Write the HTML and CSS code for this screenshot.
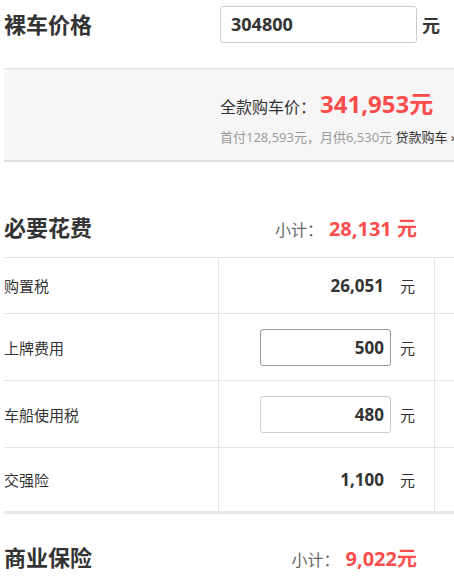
FILE: index.html
```html
<!DOCTYPE html>
<html lang="zh">
<head>
<meta charset="utf-8">
<link rel="stylesheet" href="styles.css">
</head>
<body>
<div class="page">
  <div class="naked">
    <div class="naked-title">裸车价格</div>
    <input class="naked-input" type="text" value="304800">
    <span class="naked-unit">元</span>
  </div>

  <div class="summary">
    <div class="summary-line">全款购车价<span class="punc">：</span><span class="red-big">341,953元</span></div>
    <div class="summary-sub"><span class="gray">首付128,593元<span class="punc">，</span>月供6,530元</span> <span class="loan">贷款购车 ›</span></div>
  </div>

  <div class="section-head first">
    <div class="section-title">必要花费</div>
    <div class="subtotal">小计<span class="punc">：</span><span class="red-mid">28,131 元</span></div>
  </div>

  <div class="table">
    <div class="row r1">
      <div class="cell label">购置税</div>
      <div class="cell value"><span class="val">26,051</span><span class="unit">元</span></div>
      <div class="cell extra"></div>
    </div>
    <div class="row r2">
      <div class="cell label">上牌费用</div>
      <div class="cell value"><input class="val-input focus" type="text" value="500"><span class="unit">元</span></div>
      <div class="cell extra"></div>
    </div>
    <div class="row r3">
      <div class="cell label">车船使用税</div>
      <div class="cell value"><input class="val-input" type="text" value="480"><span class="unit">元</span></div>
      <div class="cell extra"></div>
    </div>
    <div class="row r4">
      <div class="cell label">交强险</div>
      <div class="cell value"><span class="val">1,100</span><span class="unit">元</span></div>
      <div class="cell extra"></div>
    </div>
  </div>

  <div class="section-head second">
    <div class="section-title">商业保险</div>
    <div class="subtotal">小计<span class="punc">：</span><span class="red-mid">9,022元</span></div>
  </div>
</div>
</body>
</html>
```

FILE: styles.css
```css
html, body {
  margin: 0;
  padding: 0;
  overflow: hidden;
  background: #fff;
}
body {
  font-family: "Open Sans", "Noto Sans CJK SC", sans-serif;
  color: #333;
}
.page {
  width: 520px;
  padding-left: 4px;
}
.punc {
  font-family: "Noto Sans CJK TC", sans-serif;
}
.naked {
  display: flex;
  align-items: center;
  height: 48px;
  margin-bottom: 20px;
}
.naked-title {
  width: 216px;
  font-size: 22px;
  font-weight: 700;
  line-height: 30px;
}
.naked-input {
  box-sizing: border-box;
  width: 197px;
  height: 37px;
  border: 1px solid #ccc;
  border-radius: 3px;
  padding: 0 10px;
  font-family: "Open Sans", "Noto Sans CJK SC", sans-serif;
  font-size: 18px;
  font-weight: 700;
  color: #333;
  outline: none;
}
.naked-unit {
  margin-left: 5px;
  font-size: 18px;
  font-weight: 700;
}
.summary {
  border-top: 1px solid #e3e3e3;
  border-bottom: 2px solid #e0e0e0;
  background: #f6f6f6;
  height: 91px;
  box-sizing: content-box;
  padding-left: 216px;
  white-space: nowrap;
}
.summary-line {
  padding-top: 19px;
  line-height: 32px;
  font-size: 16px;
  color: #333;
}
.red-big {
  color: #fc4c4c;
  font-size: 24px;
  font-weight: 700;
  margin-left: 4px;
}
.summary-sub {
  margin-top: 4px;
  line-height: 20px;
  font-size: 13px;
}
.gray {
  color: #999;
}
.loan {
  color: #333;
}
.section-head {
  width: 413px;
  display: flex;
  justify-content: space-between;
  align-items: center;
  height: 30px;
}
.section-head.first {
  padding-top: 50px;
  padding-bottom: 15px;
}
.section-head.second {
  padding-top: 28px;
}
.section-title {
  font-size: 22px;
  font-weight: 700;
  line-height: 30px;
}
.subtotal {
  font-size: 16px;
  color: #666;
}
.red-mid {
  color: #fc4c4c;
  font-size: 20px;
  font-weight: 700;
  margin-left: 6px;
}
.table {
  border-top: 1px solid #e3e3e3;
  border-bottom: 3px solid #e8e8e8;
}
.row {
  display: flex;
  border-bottom: 1px solid #e3e3e3;
}
.row:last-child {
  border-bottom: none;
}
.r1 { height: 55px; }
.r2 { height: 66px; }
.r3 { height: 66px; }
.r4 { height: 63px; }
.cell {
  display: flex;
  align-items: center;
}
.label {
  width: 214px;
  border-right: 1px solid #e3e3e3;
  font-size: 15px;
  color: #333;
}
.value {
  width: 216px;
  border-right: 1px solid #e3e3e3;
  justify-content: flex-end;
  padding-right: 19px;
  box-sizing: border-box;
}
.extra {
  flex: 1;
}
.val {
  width: 131px;
  box-sizing: border-box;
  padding-right: 7px;
  text-align: right;
  font-size: 17px;
  font-weight: 700;
  color: #333;
}
.val-input {
  box-sizing: border-box;
  width: 131px;
  height: 37px;
  border: 1px solid #ccc;
  border-radius: 3px;
  padding: 0 6px;
  text-align: right;
  font-family: "Open Sans", "Noto Sans CJK SC", sans-serif;
  font-size: 17px;
  font-weight: 700;
  color: #333;
  outline: none;
}
.val-input.focus {
  border-color: #999;
}
.unit {
  margin-left: 9px;
  font-size: 15px;
  color: #333;
}
```
